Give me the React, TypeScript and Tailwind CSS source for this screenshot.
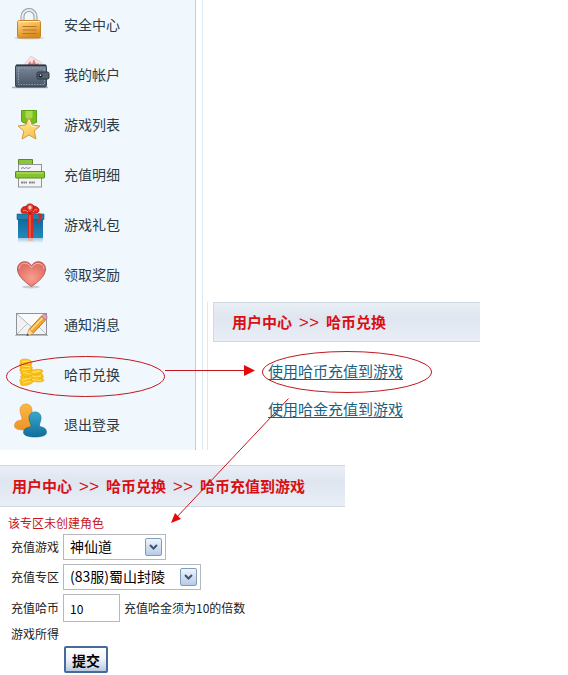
import type { ReactNode } from "react";

function Icon({ children }: { children: ReactNode }) {
  return (
    <svg viewBox="0 0 40 50" className="h-[50px] w-10 shrink-0" aria-hidden="true">
      {children}
    </svg>
  );
}

function LockIcon() {
  return (
    <Icon>
      <defs>
        <linearGradient id="lock" x2="0.4" y2="1">
          <stop offset="0" stopColor="#ffdb90" />
          <stop offset="0.5" stopColor="#f3b450" />
          <stop offset="1" stopColor="#d98a20" />
        </linearGradient>
      </defs>
      <ellipse cx="19" cy="38" rx="15" ry="1.5" fill="#b9b9bd" opacity="0.6" />
      <path d="M12.5 21v-4.5a6.5 6.5 0 0 1 13 0V21" fill="none" stroke="#9a9ca3" strokeWidth="4" />
      <path d="M12.5 21v-4.5a6.5 6.5 0 0 1 13 0V21" fill="none" stroke="#e9ebee" strokeWidth="2" />
      <rect x="7.5" y="20.5" width="23" height="17.5" rx="2" fill="url(#lock)" stroke="#c98220" />
      <path d="M8.5 21.5h21" stroke="#fff0c4" />
      <path d="M12.5 26.5h14M12.5 30h14M12.5 33.5h14" stroke="#b87420" />
    </Icon>
  );
}

function WalletIcon() {
  return (
    <Icon>
      <defs>
        <linearGradient id="wallet" x2="0" y2="1">
          <stop offset="0" stopColor="#7d8b9b" />
          <stop offset="1" stopColor="#465364" />
        </linearGradient>
      </defs>
      <path d="M2 37.5h36" stroke="#aab2bb" strokeWidth="1.5" />
      <path d="m13 16 8-10 11 7-2 4z" fill="#f7e3e3" stroke="#d9b8b8" strokeWidth="0.6" />
      <path d="m17 15 3-4 2 3 2-5 2 5 3-1-1 3z" fill="#df7f80" />
      <rect x="5.5" y="15" width="31" height="22" rx="1.5" fill="url(#wallet)" stroke="#3a4554" />
      <path d="M6 15.5h30" stroke="#2b3440" strokeWidth="1.5" />
      <path d="M8.5 18h26v16.5h-26z" fill="none" stroke="#a0adba" strokeWidth="0.8" strokeDasharray="1.5 1.2" />
      <rect x="27" y="22" width="12" height="7" rx="1.5" fill="#566273" stroke="#2a3442" />
      <circle cx="30.5" cy="25.5" r="2" fill="#15191f" />
      <circle cx="30.5" cy="25.2" r="0.9" fill="#d6dae0" />
    </Icon>
  );
}

function MedalIcon() {
  return (
    <Icon>
      <defs>
        <linearGradient id="star" x2="0.5" y2="1">
          <stop offset="0" stopColor="#fff3a0" />
          <stop offset="1" stopColor="#f8c452" />
        </linearGradient>
      </defs>
      <path d="M11.5 10.500h15v12l-4 1-3.500-4-3.500 4-4-2z" fill="#79bd1f" stroke="#5ba016" />
      <path d="M15.500 11h7v6L19 20.500 15.500 17z" fill="#a6dc4c" />
      <path
        d="m19 17.500 3.200 7.500 7.800 1-5.800 5 1.800 8-7-4-7 4 1.800-8L8 26l7.800-1z"
        fill="url(#star)"
        stroke="#cf9a42"
        strokeLinejoin="round"
      />
      <path d="m19 20 2.500 6 5 1" fill="none" stroke="#fffad0" />
    </Icon>
  );
}

function RecordsIcon() {
  return (
    <Icon>
      <path d="M8.500 14V9.500h14V14" fill="#8cc63a" stroke="#568d17" />
      <rect x="8.500" y="14.500" width="23" height="22.500" fill="#f4f4f6" stroke="#90949a" />
      <path d="m11 18.500 2-1 1.500 1 2-1 1.500 1 2.500-1" fill="none" stroke="#85888e" />
      <path d="M11 32.500h6m2 0h6" stroke="#84888f" strokeWidth="2" strokeDasharray="2 .4" />
      <rect x="5.500" y="21.500" width="29" height="6.500" rx="0.500" fill="#88c42f" stroke="#56901a" />
      <path d="M6.500 23h27" stroke="#b9e270" />
    </Icon>
  );
}

function GiftIcon() {
  return (
    <Icon>
      <defs>
        <linearGradient id="box" x2="0" y2="1">
          <stop offset="0" stopColor="#11699a" />
          <stop offset="1" stopColor="#2489bd" />
        </linearGradient>
        <linearGradient id="shine" x2="0" y2="1">
          <stop offset="0" stopColor="#9cc9df" />
          <stop offset="1" stopColor="#f0f8fe" />
        </linearGradient>
      </defs>
      <path d="M8 38h25v5H8z" fill="url(#shine)" />
      <path d="M18 38h5v3h-5z" fill="#f3a9a0" opacity="0.7" />
      <path d="M8 19h25v19H8z" fill="url(#box)" />
      <path d="M7 14h27v5.500H7z" fill="#237fae" stroke="#135a82" strokeWidth="0.6" />
      <path d="M18 14h5v24h-5z" fill="#d9281d" />
      <path d="M20 15v23" stroke="#ff8066" />
      <path
        d="M20 14c-3-2-9 1-9-3 0-4 4-6 8-3 3-4 10-1 10 2 0 5-6 2-9 4z"
        fill="#df2c22"
        stroke="#a90f0d"
        strokeWidth="0.8"
      />
      <path d="M20 13c-5-3-5-9 0-9s5 6 0 9z" fill="#ee4233" stroke="#b11916" />
      <ellipse cx="20" cy="7.500" rx="1.500" ry="2" fill="#fbd0c4" />
      <path d="M13 11c2-1 3-1 5 1M27 10c-2-1-3 0-4 2" fill="none" stroke="#ff8c78" />
      <path d="m28 13 4 1-1 6-3 3-1-1 2-4z" fill="#d3291e" />
    </Icon>
  );
}

function HeartIcon() {
  return (
    <Icon>
      <defs>
        <radialGradient id="heart" cx="0.5" cy="0.65" r="0.7">
          <stop offset="0" stopColor="#fb9d8b" />
          <stop offset="1" stopColor="#d7665f" />
        </radialGradient>
      </defs>
      <ellipse cx="21" cy="37" rx="9" ry="1.5" fill="#a9b1b8" opacity="0.6" />
      <path
        d="M21.500 36.500C15 32 7.500 26 7.500 19c0-8 10.500-10 14-3 3.500-7 14-5 14 3 0 7-7.500 13-14 17.500z"
        fill="url(#heart)"
        stroke="#bd5650"
      />
      <path d="M9 19c0-6 8-8.500 12.500-1.500C25 11 34 13 34 19" fill="none" stroke="#f9b3a6" />
    </Icon>
  );
}

function MailIcon() {
  return (
    <Icon>
      <path d="M5 35.500h33" stroke="#b9bcc0" />
      <rect x="6.500" y="13.500" width="30" height="21" fill="#f1f2f3" stroke="#8f9397" />
      <path d="m7 34 11-11M36 34 25 23" stroke="#c0c3c6" />
      <path d="m7 14 14.500 13L36 14" fill="#fafafa" stroke="#b3b6ba" />
      <path d="m17 35.500 2-6L31.500 16l4 4L23 33.500z" fill="#f2a530" stroke="#a66714" strokeWidth="0.8" />
      <path d="M21 30 32.500 18" stroke="#ffdf86" strokeWidth="1.5" />
      <path d="m31.500 16 1-1c2-2 6 1 4 4l-1 1z" fill="#e8a3b9" stroke="#a8677e" strokeWidth="0.7" />
      <path d="m19 29.500 4 4-6.500 2.500z" fill="#f5dba8" />
      <path d="m17.500 33.500-1 2.500 2.500-1z" fill="#333" />
    </Icon>
  );
}

function CoinsIcon() {
  return (
    <Icon>
      <g fill="#fbc21c" stroke="#e8a010" strokeWidth="0.5">
        <ellipse cx="17" cy="32" rx="7" ry="3" transform="rotate(-16 17 32)" />
        <ellipse cx="16" cy="29.500" rx="6.500" ry="3" transform="rotate(-12 16 29.5)" />
        <ellipse cx="17" cy="27" rx="6.500" ry="3" />
        <ellipse cx="17" cy="24" rx="6.500" ry="3" transform="rotate(12 17 24)" />
        <ellipse cx="16" cy="20" rx="6.500" ry="3" />
        <ellipse cx="16" cy="17" rx="6.500" ry="3" transform="rotate(8 16 17)" />
        <ellipse cx="15.500" cy="14.500" rx="6" ry="3" />
        <ellipse cx="16" cy="12" rx="6" ry="3" transform="rotate(8 16 12)" />
        <ellipse cx="27" cy="29.500" rx="7" ry="2.500" transform="rotate(6 27 29.5)" />
        <ellipse cx="26" cy="27" rx="7.500" ry="2.500" />
        <ellipse cx="26" cy="24.500" rx="7" ry="2.500" transform="rotate(6 26 24.5)" />
        <ellipse cx="26" cy="22" rx="7" ry="2.500" transform="rotate(-8 26 22)" />
      </g>
      <path
        d="M12 12c3-1 6-1 8 0M12 15.500c2 1 6 1 8 1M12 19c3 1 5 1 8 0M13 22.500c3 0 6 1 8 2M22 22c3 0 6-1 8-1M22 26c3 1 6 1 9 0M12 30l9-2M22 29.500l9 1M13 33l8-2"
        fill="none"
        stroke="#ffe45a"
        strokeWidth="1.2"
      />
    </Icon>
  );
}

function UsersIcon() {
  return (
    <Icon>
      <defs>
        <linearGradient id="back" x2="0" y2="1">
          <stop offset="0" stopColor="#fdb748" />
          <stop offset="1" stopColor="#ee9426" />
        </linearGradient>
        <linearGradient id="front" x2="0" y2="1">
          <stop offset="0" stopColor="#38a9cc" />
          <stop offset="1" stopColor="#126c9b" />
        </linearGradient>
      </defs>
      <path
        d="M16 4c-4 0-6 3-6 6 0 4 2 6 2 9 0 1-1 1-3 1.500C6 21 4.500 23 4.500 26c0 3 5 4 10 4 6 0 12-2 12-6 0-2-2-4-5-5-1-1 .5-4 .5-8 0-4-2-7-6-7z"
        fill="url(#back)"
        stroke="#dc8a20"
        strokeWidth="0.6"
      />
      <path
        d="M25 12c-4 0-6 3-6 6 0 4 2 5 2 8 0 1-1 1-3 1.500-3 .5-4.500 2.500-4.500 5 0 3 5 4.500 11.500 4.500s11.500-1.500 11.500-4.500c0-3-1.500-5-5-5.500-2-.5-2-1-2-2 0-2 1.500-4 1.500-7 0-3.500-2-6-6-6z"
        fill="url(#front)"
        stroke="#116687"
        strokeWidth="0.6"
      />
    </Icon>
  );
}

const menuItems = [
  { label: "安全中心", icon: <LockIcon /> },
  { label: "我的帐户", icon: <WalletIcon /> },
  { label: "游戏列表", icon: <MedalIcon /> },
  { label: "充值明细", icon: <RecordsIcon /> },
  { label: "游戏礼包", icon: <GiftIcon /> },
  { label: "领取奖励", icon: <HeartIcon /> },
  { label: "通知消息", icon: <MailIcon /> },
  { label: "哈币兑换", icon: <CoinsIcon /> },
  { label: "退出登录", icon: <UsersIcon /> },
];

function Sidebar() {
  return (
    <nav className="w-[196px] shrink-0 border-r border-[#b2d8d2] bg-[#f0f8fe]">
      {menuItems.map((item) => (
        <a key={item.label} href="#" className="flex h-[50px] items-center gap-3.5 pl-2.5 text-sm text-[#2c3b46]">
          {item.icon}
          <span className="pb-0.5">{item.label}</span>
        </a>
      ))}
    </nav>
  );
}

function Breadcrumb({ items }: { items: string[] }) {
  return (
    <h2 className="flex h-10 items-center border-y border-[#cfdae3] bg-linear-to-b from-[#e9eef5] via-[#dfe6f0] via-40% to-[#e9eef6] text-[15px] font-bold whitespace-nowrap text-[#d80f14]">
      {items.map((item, i) => (
        <span key={item} className="flex items-center">
          {i > 0 && (
            <span className="w-[34px] pt-1 text-center font-['Liberation_Mono'] text-[17px] leading-5 font-normal">
              &gt;&gt;
            </span>
          )}
          {item}
        </span>
      ))}
    </h2>
  );
}

function Select({ id, options, className }: { id: string; options: string[]; className: string }) {
  return (
    <div className={`relative ${className}`}>
      <select id={id} className="h-[26px] w-full appearance-none border border-[#b5b8bd] bg-white pl-1.5 pb-0.5 text-sm text-black">
        {options.map((o) => (
          <option key={o}>{o}</option>
        ))}
      </select>
      <span className="pointer-events-none absolute top-1 right-1 flex h-[18px] w-[17px] items-center justify-center rounded-[2px] border border-[#7f9db9] bg-linear-to-b from-[#eef4fc] to-[#b7cbe6]">
        <svg viewBox="0 0 9 6" className="h-1.5 w-[9px]">
          <path d="m1 1 3.500 3.500L8 1" fill="none" stroke="#3f5572" strokeWidth="2" />
        </svg>
      </span>
    </div>
  );
}

// Red ellipses and arrows that lead from the menu to the links to the form
function Annotations() {
  return (
    <svg
      viewBox="0 0 568 675"
      className="pointer-events-none absolute top-0 left-0 h-[675px] w-[568px] max-w-none"
      fill="none"
      stroke="#c01820"
      aria-hidden="true"
    >
      <ellipse cx="85.500" cy="376.500" rx="79" ry="20" />
      <ellipse cx="347" cy="372" rx="84.500" ry="20.500" />
      <path d="M165 370.500h80M288.500 398.500 176 518" />
      <path d="m244 365 11 5.500-11 5.500zM171 523l4-10 6 6z" fill="#e80808" stroke="none" />
    </svg>
  );
}

export default function App() {
  return (
    <div className="relative bg-white font-['Noto_Sans_CJK_SC',sans-serif]">
      <div className="flex">
        <Sidebar />
        <main className="ml-1.5 flex flex-1 flex-col justify-end border-l border-[#dcebf2]">
          <div className="ml-1 h-[148px] border-l border-[#d9ecf3] pr-[88px] pl-[5px]">
            <div className="border-l border-[#cfdae3] [&>h2]:pl-[18px]">
              <Breadcrumb items={["用户中心", "哈币兑换"]} />
            </div>
            <div className="flex flex-col items-start gap-4 pt-[18px] pl-[55px] text-[15px] leading-[22px] whitespace-nowrap text-[#186283]">
              <a href="#" className="underline underline-offset-2">使用哈币充值到游戏</a>
              <a href="#" className="underline underline-offset-2">使用哈金充值到游戏</a>
            </div>
          </div>
        </main>
      </div>

      <section className="pt-[15px]">
        <div className="mr-[223px] [&>h2]:h-[42px] [&>h2]:pl-3">
          <Breadcrumb items={["用户中心", "哈币兑换", "哈币充值到游戏"]} />
        </div>
        <p className="pt-1.5 pl-2 text-xs leading-5 text-[#c81418]">该专区未创建角色</p>
        <form className="flex flex-col items-start gap-1 pt-px pl-[11px] text-xs text-[#222]">
          <div className="flex items-center gap-1">
            <label htmlFor="game" className="w-12">充值游戏</label>
            <Select id="game" options={["神仙道"]} className="w-[103px]" />
          </div>
          <div className="flex items-center gap-1">
            <label htmlFor="zone" className="w-12">充值专区</label>
            <Select id="zone" options={["(83服)蜀山封陵"]} className="w-[138px]" />
          </div>
          <div className="flex items-center gap-1">
            <label htmlFor="amount" className="w-12">充值哈币</label>
            <input id="amount" defaultValue="10" className="h-7 w-[57px] border border-[#b5b8bd] bg-white px-1.5 text-xs text-black" />
            <span>充值哈金须为10的倍数</span>
          </div>
          <p className="leading-4">游戏所得</p>
          <button
            type="button"
            className="ml-[53px] h-[27px] w-11 rounded-[2px] border-2 border-[#456b9c] bg-linear-to-b from-white via-[#eef2f8] to-[#b9c9e2] text-sm leading-5 font-bold text-black"
          >
            提交
          </button>
        </form>
      </section>
      <Annotations />
    </div>
  );
}
